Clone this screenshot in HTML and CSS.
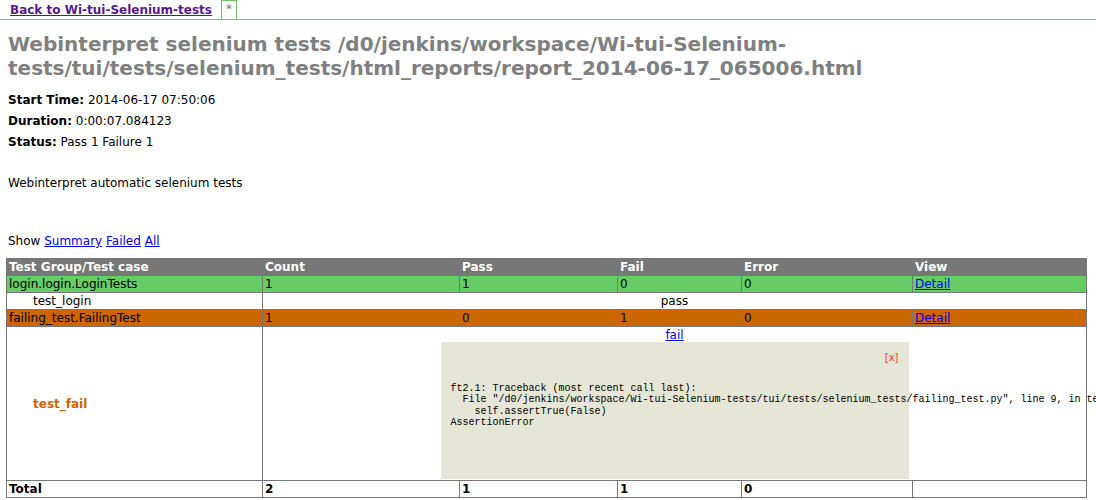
FILE: index.html
```html
<!DOCTYPE html>
<html>
<head>
<meta charset="utf-8">
<title>Webinterpret selenium tests</title>
<link rel="stylesheet" href="styles.css">
</head>
<body>
<div class="navbar">
  <a class="back" href="#">Back to Wi-tui-Selenium-tests</a>
  <span class="tab">*</span>
</div>
<div class="frame">
  <h1>Webinterpret selenium tests /d0/jenkins/workspace/Wi-tui-Selenium-tests/tui/tests/selenium_tests/html_reports/report_2014-06-17_065006.html</h1>
  <div class="heading">
    <p class="attribute"><strong>Start Time:</strong> 2014-06-17 07:50:06</p>
    <p class="attribute"><strong>Duration:</strong> 0:00:07.084123</p>
    <p class="attribute"><strong>Status:</strong> Pass 1 Failure 1</p>
    <p class="description">Webinterpret automatic selenium tests</p>
  </div>
  <p class="show-line">Show <a href="#">Summary</a> <a href="#">Failed</a> <a href="#">All</a></p>
  <table class="result-table">
    <colgroup>
      <col class="c-name">
      <col class="c-count">
      <col class="c-pass">
      <col class="c-fail">
      <col class="c-error">
      <col class="c-view">
    </colgroup>
    <tr class="header-row">
      <td>Test Group/Test case</td>
      <td>Count</td>
      <td>Pass</td>
      <td>Fail</td>
      <td>Error</td>
      <td>View</td>
    </tr>
    <tr class="pass-class">
      <td>login.login.LoginTests</td>
      <td>1</td>
      <td>1</td>
      <td>0</td>
      <td>0</td>
      <td><a href="#">Detail</a></td>
    </tr>
    <tr>
      <td><div class="testcase">test_login</div></td>
      <td colspan="5" class="result-cell">pass</td>
    </tr>
    <tr class="fail-class">
      <td>failing_test.FailingTest</td>
      <td>1</td>
      <td>0</td>
      <td>1</td>
      <td>0</td>
      <td><a href="#">Detail</a></td>
    </tr>
    <tr>
      <td><div class="testcase fail-case">test_fail</div></td>
      <td colspan="5" class="result-cell">
        <a class="popup-link" href="#">fail</a>
        <div class="popup-window">
          <div class="popup-close">[x]</div>
<pre class="popup-pre">ft2.1: Traceback (most recent call last):
  File "/d0/jenkins/workspace/Wi-tui-Selenium-tests/tui/tests/selenium_tests/failing_test.py", line 9, in test_fail
    self.assertTrue(False)
AssertionError</pre>
        </div>
      </td>
    </tr>
    <tr class="total-row">
      <td>Total</td>
      <td>2</td>
      <td>1</td>
      <td>1</td>
      <td>0</td>
      <td>&nbsp;</td>
    </tr>
  </table>
</div>
</body>
</html>
```
FILE: styles.css
```css
html, body {
  margin: 0;
  padding: 0;
  overflow: hidden;
  background: #fff;
}

body {
  font-family: "DejaVu Sans", Verdana, sans-serif;
  font-size: 12px;
  line-height: 14px;
  color: #000;
}

.navbar {
  display: flex;
  align-items: stretch;
  height: 19px;
  border-bottom: 1px solid #66c866;
  padding-left: 10px;
  gap: 9px;
}

.back {
  align-self: center;
  font-weight: bold;
  color: #551a8b;
  text-decoration: underline;
}

.tab {
  width: 14px;
  border: 1px solid #66c866;
  border-bottom: none;
  color: #777;
  text-align: center;
  font-size: 12px;
  line-height: 17px;
}

.frame {
  padding: 8px;
}

h1 {
  font-size: 20px;
  line-height: 24px;
  font-weight: bold;
  color: gray;
  margin: 4px 0 13px;
}

.heading {
  margin: 0;
}

.attribute {
  margin: 7px 0 0;
}

.description {
  margin: 27px 0 0;
}

.show-line {
  margin: 44px 0 10px;
}

a {
  color: #0000ee;
}

.result-table {
  width: 100%;
  margin-left: -2px;
  table-layout: fixed;
  border-collapse: collapse;
  border: 1px solid #777;
  font-size: 12px;
}

.c-name { width: 256px; }
.c-count { width: 197px; }
.c-pass { width: 158px; }
.c-fail { width: 124px; }
.c-error { width: 171px; }
.c-view { width: 174px; }

.result-table td {
  border: 1px solid #777;
  padding: 1px 2px;
  text-align: left;
}

.header-row td {
  background: #777;
  color: #fff;
  font-weight: bold;
}

.pass-class td {
  background: #66cc66;
}

.fail-class td {
  background: #cc6600;
}

.total-row td {
  font-weight: bold;
}

.result-table td.result-cell {
  text-align: center;
}

.testcase {
  margin-left: 24px;
}

.fail-case {
  color: #cc6600;
  font-weight: bold;
}

.popup-link {
  display: block;
}

.popup-window {
  width: 448px;
  margin: 0 auto;
  padding: 10px;
  background: #e6e6d6;
  text-align: left;
  font-family: "Liberation Mono", "DejaVu Sans Mono", monospace;
  font-size: 10px;
}

.popup-close {
  text-align: right;
  color: #f33;
  font-family: "DejaVu Sans", sans-serif;
  font-size: 10px;
  line-height: 12px;
}

.popup-pre {
  margin: 19px 0 41px;
  font-family: "Liberation Mono", "DejaVu Sans Mono", monospace;
  font-size: 10px;
  line-height: 11.33px;
  white-space: pre;
}
```
